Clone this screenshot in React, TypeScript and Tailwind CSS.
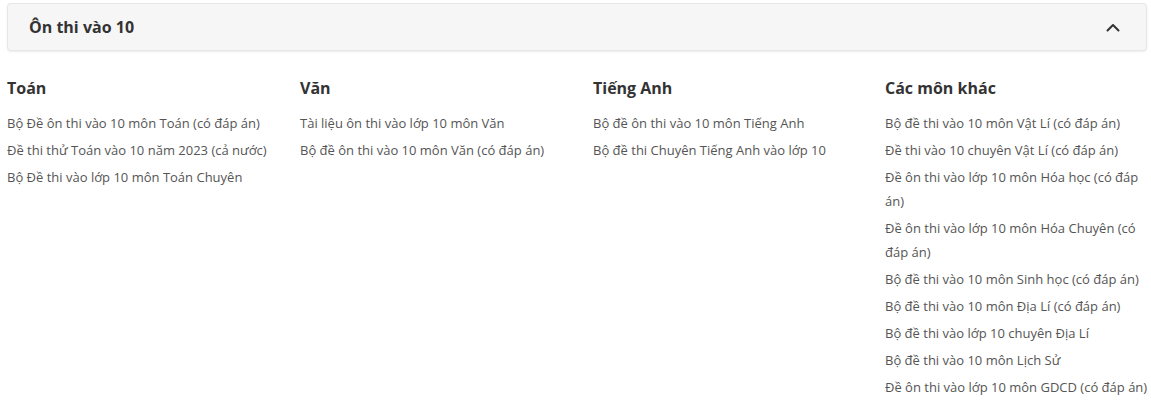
import React from "react";

const cols: { title: string; items: string[] }[] = [
  {
    title: "Toán",
    items: [
      "Bộ Đề ôn thi vào 10 môn Toán (có đáp án)",
      "Đề thi thử Toán vào 10 năm 2023 (cả nước)",
      "Bộ Đề thi vào lớp 10 môn Toán Chuyên",
    ],
  },
  {
    title: "Văn",
    items: ["Tài liệu ôn thi vào lớp 10 môn Văn", "Bộ đề ôn thi vào 10 môn Văn (có đáp án)"],
  },
  {
    title: "Tiếng Anh",
    items: ["Bộ đề ôn thi vào 10 môn Tiếng Anh", "Bộ đề thi Chuyên Tiếng Anh vào lớp 10"],
  },
  {
    title: "Các môn khác",
    items: [
      "Bộ đề thi vào 10 môn Vật Lí (có đáp án)",
      "Đề thi vào 10 chuyên Vật Lí (có đáp án)",
      "Đề ôn thi vào lớp 10 môn Hóa học (có đáp án)",
      "Đề ôn thi vào lớp 10 môn Hóa Chuyên (có đáp án)",
      "Bộ đề thi vào 10 môn Sinh học (có đáp án)",
      "Bộ đề thi vào 10 môn Địa Lí (có đáp án)",
      "Bộ đề thi vào lớp 10 chuyên Địa Lí",
      "Bộ đề thi vào 10 môn Lịch Sử",
      "Đề ôn thi vào lớp 10 môn GDCD (có đáp án)",
    ],
  },
];

export default function App() {
  return (
    <div
      className="w-[1151px] h-[401px] overflow-hidden bg-white pl-[7px] pt-[3px]"
      style={{ fontFamily: '"Open Sans", "Noto Sans", sans-serif' }}
    >
      <div className="w-[1140px] h-[48px] rounded-[4px] border border-[#e6e6e6] bg-[#f6f6f6] shadow-[0_1px_2px_rgba(0,0,0,0.08)] flex items-center justify-between pl-[21px] pr-[26px]">
        <span className="text-[16px] font-bold text-[#333] leading-none">Ôn thi vào 10</span>
        <svg width="14" height="9" viewBox="0 0 14 9" fill="none" className="mt-[1px]">
          <path d="M1.5 7.5L7 2L12.5 7.5" stroke="#333" strokeWidth="2" strokeLinecap="round" strokeLinejoin="round" />
        </svg>
      </div>
      <div className="flex mt-[25px]">
        {cols.map((c, i) => (
          <div key={i} className={i === 3 ? "w-[265px] shrink-0" : i === 2 ? "w-[292px] shrink-0" : "w-[293px] shrink-0"}>
            <div className="text-[16px] font-bold text-[#333] leading-[24px]">{c.title}</div>
            <ul className="mt-[11px] flex flex-col gap-[3px]">
              {c.items.map((t, j) => (
                <li key={j} className="text-[13px] leading-[24px] text-[#555]">
                  {t}
                </li>
              ))}
            </ul>
          </div>
        ))}
      </div>
    </div>
  );
}
